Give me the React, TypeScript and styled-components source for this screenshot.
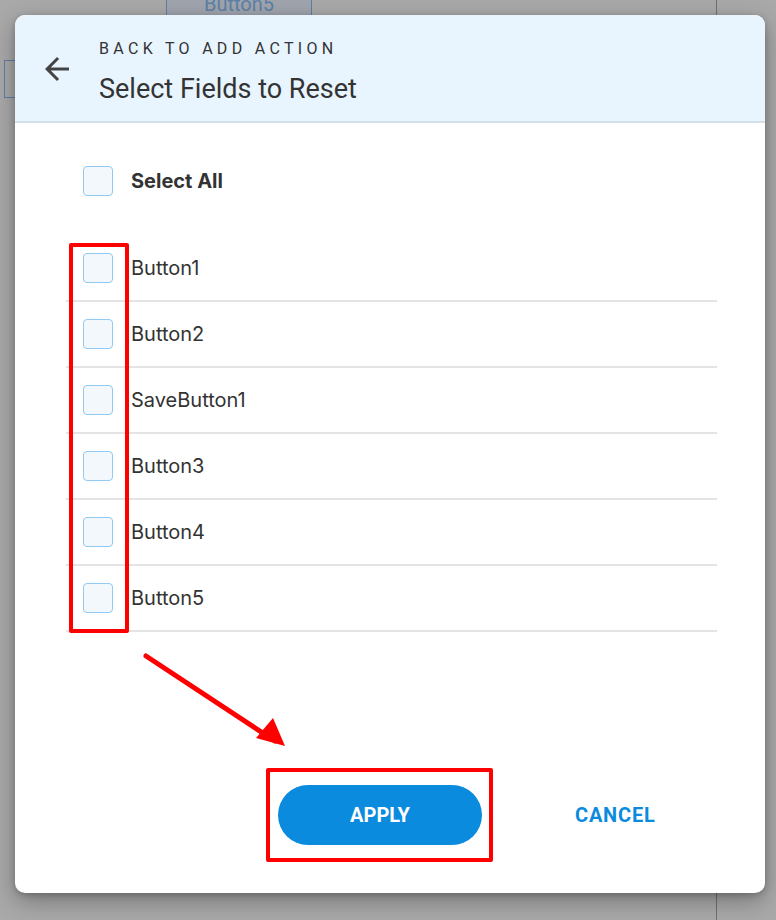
import React from "react";
import styled, { createGlobalStyle } from "styled-components";

const Global = createGlobalStyle`
  html, body { margin: 0; padding: 0; }
  body {
    background: #a9a9a9;
    font-family: Roboto, "Liberation Sans", Arial, sans-serif;
    width: 776px;
    height: 920px;
    overflow: hidden;
  }
`;

const Page = styled.div`
  position: relative;
  width: 776px;
  height: 920px;
  padding: 15px 0 0 15px;
  box-sizing: border-box;
`;

const Backdrop = styled.div`
  position: absolute;
  inset: 0;
  z-index: 0;
`;

const GhostButton = styled.div`
  position: absolute;
  left: 166px;
  top: -12px;
  width: 146px;
  height: 28px;
  box-sizing: border-box;
  border: 1.5px solid #5b7fa7;
  background: #a0a4ad;
  color: #5d80a7;
  font-size: 20px;
  display: flex;
  align-items: flex-end;
  justify-content: center;
  line-height: 22px;
`;

const GhostBox = styled.div`
  position: absolute;
  left: 4px;
  top: 60px;
  width: 40px;
  height: 38px;
  box-sizing: border-box;
  border: 1.5px solid #5b7fa7;
`;

const GhostLine = styled.div`
  position: absolute;
  left: 716px;
  top: 0;
  width: 1px;
  height: 920px;
  background: #707070;
`;

const Dialog = styled.div`
  position: relative;
  z-index: 1;
  width: 750px;
  height: 878px;
  background: #ffffff;
  border-radius: 10px;
  box-shadow: 0 8px 24px rgba(0, 0, 0, 0.3), 0 2px 6px rgba(0, 0, 0, 0.2);
  display: flex;
  flex-direction: column;
  overflow: hidden;
`;

const Header = styled.div`
  height: 108px;
  box-sizing: border-box;
  background: #e8f4fe;
  border-bottom: 2px solid #d3dfe9;
  display: flex;
  align-items: flex-start;
  padding: 24px 24px 0 24px;
  gap: 24px;
`;

const BackIcon = styled.svg`
  width: 36px;
  height: 36px;
  margin-top: 12px;
  flex: none;
  fill: #444444;
`;

const HeaderText = styled.div`
  display: flex;
  flex-direction: column;
  gap: 15px;
`;

const Overline = styled.div`
  font-size: 16px;
  line-height: 20px;
  letter-spacing: 4.3px;
  color: #333333;
`;

const Title = styled.div`
  font-size: 27px;
  line-height: 30px;
  color: #333333;
`;

const List = styled.div`
  padding: 26px 48px 0 51px;
  display: flex;
  flex-direction: column;
`;

const Row = styled.label<{ $divider?: boolean; $bold?: boolean }>`
  height: 64px;
  display: flex;
  align-items: center;
  gap: 18px;
  padding-left: 17px;
  border-bottom: ${(p) => (p.$divider ? "2px solid #e4e4e4" : "none")};
  margin-bottom: ${(p) => (p.$bold ? "23px" : "0")};
  font-family: Inter, Roboto, "Liberation Sans", Arial, sans-serif;
  font-size: 20px;
  font-weight: ${(p) => (p.$bold ? 700 : 400)};
  color: #333333;
`;

const Box = styled.span`
  width: 30px;
  height: 30px;
  box-sizing: border-box;
  border: 1.5px solid #91c9f5;
  background: #f3f8fd;
  border-radius: 4px;
  flex: none;
`;

const Footer = styled.div`
  margin-top: auto;
  padding: 0 0 48px 263px;
  display: flex;
  align-items: center;
  gap: 77px;
`;

const ApplyButton = styled.button`
  width: 204px;
  height: 60px;
  border: none;
  border-radius: 30px;
  background: #0a8bde;
  color: #ffffff;
  font-family: Roboto, "Liberation Sans", Arial, sans-serif;
  font-size: 20px;
  font-weight: 700;
  cursor: pointer;
`;

const CancelButton = styled.button`
  border: none;
  background: transparent;
  padding: 0 16px;
  height: 60px;
  color: #0a8bde;
  font-family: Roboto, "Liberation Sans", Arial, sans-serif;
  font-size: 20px;
  font-weight: 700;
  letter-spacing: 0.8px;
  cursor: pointer;
`;

const Highlight = styled.div<{ $x: number; $y: number; $w: number; $h: number }>`
  position: absolute;
  left: ${(p) => p.$x}px;
  top: ${(p) => p.$y}px;
  width: ${(p) => p.$w}px;
  height: ${(p) => p.$h}px;
  box-sizing: border-box;
  border: 4px solid #ff0000;
  border-radius: 2px;
  pointer-events: none;
`;

const ArrowSvg = styled.svg`
  position: absolute;
  left: 120px;
  top: 630px;
  width: 160px;
  height: 110px;
  pointer-events: none;
`;

const fields = ["Button1", "Button2", "SaveButton1", "Button3", "Button4", "Button5"];

export default function App() {
  return (
    <>
      <Global />
      <Page>
        <Backdrop>
          <GhostButton>Button5</GhostButton>
          <GhostBox />
          <GhostLine />
        </Backdrop>
        <Dialog>
          <Header>
            <BackIcon viewBox="0 0 24 24">
              <path d="M20 11H7.83l5.59-5.59L12 4l-8 8 8 8 1.41-1.41L7.83 13H20v-2z" />
            </BackIcon>
            <HeaderText>
              <Overline>BACK TO ADD ACTION</Overline>
              <Title>Select Fields to Reset</Title>
            </HeaderText>
          </Header>
          <List>
            <Row $bold>
              <Box />
              Select All
            </Row>
            {fields.map((f) => (
              <Row key={f} $divider>
                <Box />
                {f}
              </Row>
            ))}
          </List>
          <Footer>
            <ApplyButton>APPLY</ApplyButton>
            <CancelButton>CANCEL</CancelButton>
          </Footer>
          <Highlight $x={54} $y={228} $w={60} $h={390} />
          <Highlight $x={251} $y={753} $w={227} $h={94} />
          <ArrowSvg viewBox="0 0 160 110">
            <line x1="11" y1="11" x2="140" y2="96" stroke="#ff0000" strokeWidth="5" strokeLinecap="round" />
            <polygon points="162,116 133,108 150,88" fill="#ff0000" transform="translate(-12,-15)" />
          </ArrowSvg>
        </Dialog>
      </Page>
    </>
  );
}
